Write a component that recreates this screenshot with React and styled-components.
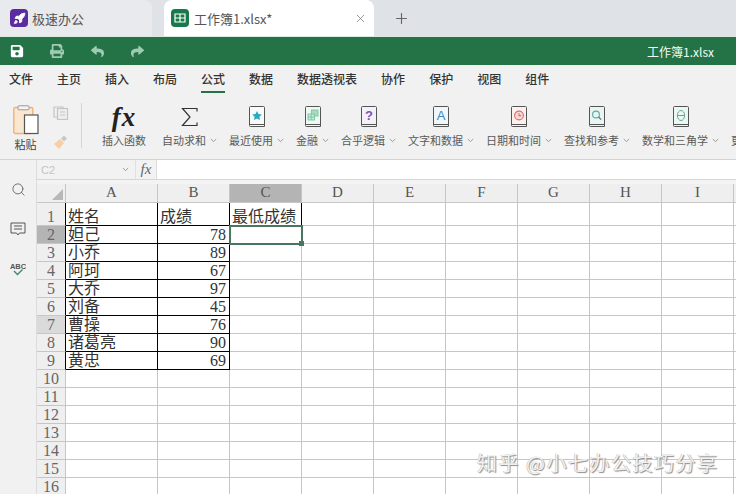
import React from 'react';
import styled, { createGlobalStyle } from 'styled-components';
import { FaSave, FaPrint, FaReply, FaShare } from 'react-icons/fa';
import { Rocket, X, Plus, Search } from 'lucide-react';

const CJK = `"Noto Sans CJK SC", "Noto Sans", sans-serif`;
const SERIF = `"Liberation Serif", "Noto Sans CJK SC", serif`;

const Global = createGlobalStyle`
  html, body { margin: 0; padding: 0; background: #fff; }
  * { box-sizing: border-box; }
`;
const Page = styled.div`
  width: 736px; height: 494px; overflow: hidden; position: relative;
  display: flex; flex-direction: column; font-family: ${CJK}; background: #fff;
`;
const TabBar = styled.div`
  height: 37px; flex: none; display: flex; background: #dfe2e7; border-bottom: 1px solid #dcebe2;
`;
const Tab = styled.div`
  height: 36px; display: flex; align-items: center; flex: none;
  width: ${p => p.$active ? '210px' : '152px'};
  margin-right: ${p => p.$active ? '19px' : '12px'};
  padding-left: ${p => p.$active ? '7px' : '10px'};
  background: ${p => p.$active ? '#fff' : '#e8eaed'};
  border-radius: ${p => p.$active ? '8px 8px 0 0' : '0 8px 0 0'};
  font-size: 13px; color: #555;
`;
const TabLogo = styled.span`
  width: 18px; height: 18px; border-radius: 4px; flex: none; margin-right: ${p => p.$gap}px;
  display: flex; align-items: center; justify-content: center;
  background: ${p => p.$bg}; color: #fff;
`;
const TabTitle = styled.span`flex: 1; white-space: nowrap;`;
const CloseBtn = styled.span`display: flex; color: #777; margin-right: 7px;`;
const NewTab = styled.span`display: flex; align-items: center; color: #666;`;

const QuickBar = styled.div`
  height: 28px; flex: none; background: #237346; display: flex; align-items: center;
  padding: 0 22px 0 10px; color: #fff;
`;
const QuickIcon = styled.span`
  width: 14px; display: flex; justify-content: center; margin-right: 26px;
  color: ${p => p.$dim ? '#9fcbb2' : '#fff'};
`;
const DocTitle = styled.span`margin-left: auto; font-size: 12px; color: #f2fbf5;`;

const MenuBar = styled.div`
  height: 30px; flex: none; background: #f1f1f1; display: flex; gap: 24px; padding-left: 9px;
`;
const MenuItem = styled.div`
  height: 28px; line-height: 28px; font-size: 12px; font-weight: 500; color: #333; white-space: nowrap;
  border-bottom: ${p => p.$active ? '2px solid #237346' : 'none'};
`;

const Ribbon = styled.div`
  height: 65px; flex: none; background: #f1f1f1; border-bottom: 1px solid #d4d4d4;
  display: flex; align-items: flex-start; padding-left: 13px; overflow: hidden;
`;
const PasteCol = styled.div`
  width: 25px; flex: none; margin-top: 10px; display: flex; flex-direction: column; align-items: center;
`;
const PasteLabel = styled.span`font-size: 11px; color: #444; line-height: 14px; margin-top: 2px; white-space: nowrap;`;
const SmallCol = styled.div`
  width: 17px; margin-left: 14px; margin-top: 11px; flex: none; display: flex; flex-direction: column; gap: 15px; align-items: center;
`;
const Divider = styled.div`width: 1px; height: 45px; margin: 8px 20px 0 12px; background: #d6d6d6; flex: none;`;
const FnItem = styled.div`
  flex: none; display: flex; flex-direction: column; align-items: center;
  margin-right: ${p => p.$plain ? '16px' : '12px'};
`;
const FnIcon = styled.div`
  height: 28px; margin-top: 8px; margin-bottom: 1px; display: flex; align-items: center; justify-content: center;
`;
const FnLabel = styled.div`
  display: flex; align-items: center; gap: 4px; margin-top: 1px; font-size: 11px; line-height: 14px; color: #595959; white-space: nowrap;
`;
const FxGlyph = styled.span`
  font-family: "Liberation Serif", serif; font-style: italic; font-weight: 700; font-size: 27px; line-height: 28px; letter-spacing: 1px; color: #222;
`;

const Body = styled.div`flex: 1; min-height: 0; display: flex;`;
const SideBar = styled.div`
  width: 37px; flex: none; background: #f1f1f1; border-right: 1px solid #dcdcdc;
  display: flex; flex-direction: column; align-items: center; padding-top: 21px; gap: 24px; color: #555;
`;
const SideIcon = styled.span`display: flex; height: 16px; align-items: center;`;
const SheetArea = styled.div`flex: 1; min-width: 0; overflow: hidden; display: flex; flex-direction: column; background: #f3f3f3;`;
const FormulaBar = styled.div`
  height: 20px; flex: none; display: flex; border-bottom: 1px solid #d6d6d6; background: #fff;
`;
const NameBox = styled.div`
  width: 99px; flex: none; background: #f2f2f2; display: flex; align-items: center; justify-content: space-between;
  padding: 0 6px 0 4px; color: #c4c4c4; font: 11px "Liberation Sans", sans-serif; border-right: 1px solid #e0e0e0;
`;
const FxBox = styled.div`
  width: 21px; flex: none; background: #f2f2f2; border-right: 1px solid #dcdcdc; text-align: center;
  font: italic 15px/19px "Liberation Serif", serif; color: #666;
`;
const SheetGap = styled.div`height: 4px; flex: none;`;
const Grid = styled.div`
  display: grid; grid-template-columns: 29px 92px repeat(9, 72px);
  grid-auto-rows: 18px; grid-template-rows: 19px 23px; background: #fff; width: 769px;
`;
const Corner = styled.div`
  background: #efefef; border-right: 1px solid #c6c6c6; border-bottom: 1px solid #c6c6c6;
  display: flex; align-items: flex-end; justify-content: flex-end; padding: 0 2px 2px 0;
`;
const ColHead = styled.div`
  background: ${p => p.$sel ? '#b4b4b4' : '#efefef'}; color: #555;
  border-right: 1px solid #c6c6c6; border-bottom: 1px solid #c6c6c6;
  text-align: center; font: 15px/17px ${SERIF};
`;
const RowHead = styled.div`
  background: ${p => p.$sel === 'on' ? '#b4b4b4' : p.$sel === 'hover' ? '#dadada' : '#efefef'}; color: #666;
  border-right: 1px solid ${p => p.$black ? '#000' : '#c6c6c6'}; border-bottom: 1px solid #c6c6c6;
  font: 16px/17px ${SERIF};
  display: flex; align-items: flex-end; justify-content: center;
`;
const Cell = styled.div`
  position: relative; white-space: nowrap; padding: 0 3px 0 2px;
  border-right: 1px solid ${p => p.$right ? '#000' : '#c6c6c6'};
  border-bottom: 1px solid ${p => p.$bottom ? '#000' : '#c6c6c6'};
  display: flex; align-items: flex-end; justify-content: ${p => p.$num ? 'flex-end' : 'flex-start'};
  font-family: ${SERIF}; font-size: 16px; line-height: 17px; color: #333;
`;
const Selection = styled.div`
  position: absolute; left: -1px; top: -1px; right: -2px; bottom: -2px; border: 2px solid #4a7560; z-index: 1;
`;
const Handle = styled.div`
  position: absolute; right: -3px; bottom: -3px; width: 5px; height: 5px; background: #4a7560;
`;
const Watermark = styled.div`
  position: absolute; left: 477px; top: 450px; font-size: 20px; line-height: 26px; letter-spacing: 1.5px; white-space: nowrap; z-index: 2;
  color: rgba(255,255,255,.85); text-shadow: 1px 1px 1px #8c8c8c, -0.5px -0.5px 0 #bbb;
`;

const Chevron = () => (
  <svg width="7" height="5" viewBox="0 0 7 5"><path d="M.8 1l2.7 2.6L6.2 1" fill="none" stroke="#888" strokeWidth=".8" /></svg>
);
const Sigma = () => (
  <svg width="18" height="20" viewBox="0 0 18 20"><path d="M16 4.5V1.5H1.5L9 10 1.5 18.5H16V15.5" fill="none" stroke="#333" strokeWidth="1.2" /></svg>
);
const Book = ({ tint, children }) => (
  <svg width="18" height="24" viewBox="0 0 18 24">
    <path d="M1.5 2.5a1 1 0 0 1 1-1h13a1 1 0 0 1 1 1v19h-14a1 1 0 0 1-1-1z" fill={tint} stroke="#555" strokeWidth="1" />
    <path d="M1.5 19.5h15" stroke="#555" strokeWidth="1" />
    {children}
  </svg>
);
const glyphs = {
  star: <path d="M9 6l1.5 3 3.3.4-2.4 2.3.6 3.2L9 13.4l-3 1.5.6-3.2-2.4-2.3 3.3-.4z" fill="#27a9c0" />,
  money: <g fill="none" stroke="#7cc4a0" strokeWidth=".9"><rect x="7.5" y="5" width="6.5" height="6" fill="#a6dcc0" /><rect x="4" y="9" width="6.5" height="6" fill="#c4e9d6" /><path d="M4 12h6.5M7.2 9v6" /></g>,
  question: <text x="9" y="15" textAnchor="middle" fontFamily="Liberation Sans" fontWeight="700" fontSize="13" fill="#7a55b0">?</text>,
  letter: <text x="9" y="15" textAnchor="middle" fontFamily="Liberation Sans" fontSize="13" fill="#3f86b5">A</text>,
  clock: <g fill="none" stroke="#d9706c" strokeWidth="1.1"><circle cx="9" cy="10.5" r="4.4" fill="#f8d8d6" /><path d="M9 8.2v2.4h2.2" /></g>,
  lens: <g fill="none" stroke="#5aa9a4" strokeWidth="1.1"><circle cx="8" cy="9.5" r="3.4" /><path d="M10.6 12l2.6 2.6" stroke="#666" /></g>,
  theta: <g fill="none" stroke="#5da88c" strokeWidth="1"><ellipse cx="9" cy="10.5" rx="3.6" ry="5" /><path d="M5.4 10.5h7.2" /></g>,
};
const fns = [
  ['最近使用', 'star', '#f7fbfb'], ['金融', 'money', '#eef8f3'], ['合乎逻辑', 'question', '#f5f1fa'],
  ['文字和数据', 'letter', '#f0f7fb'], ['日期和时间', 'clock', '#fdf1f0'], ['查找和参考', 'lens', '#e9f5f3'],
  ['数学和三角学', 'theta', '#ecf7f3'], ['更多函数', 'star', '#f7fbfb'],
];
const menus = ['文件', '主页', '插入', '布局', '公式', '数据', '数据透视表', '协作', '保护', '视图', '组件'];
const cols = ['A', 'B', 'C', 'D', 'E', 'F', 'G', 'H', 'I', ''];
const data = [['姓名', '成绩', '最低成绩'], ['妲己', 78], ['小乔', 89], ['阿珂', 67], ['大乔', 97], ['刘备', 45], ['曹操', 76], ['诸葛亮', 90], ['黄忠', 69]];

export default function App() {
  const rows = Array.from({ length: 16 }, (_, i) => i);
  return (
    <Page>
      <Global />
      <TabBar>
        <Tab>
          <TabLogo $bg="#5a2ca0" $gap={4}><Rocket size={13} fill="#fff" strokeWidth={1.5} /></TabLogo>
          <TabTitle>极速办公</TabTitle>
        </Tab>
        <Tab $active>
          <TabLogo $bg="#167a4a" $gap={5}>
            <svg width="12" height="10" viewBox="0 0 12 10"><path d="M1 1h10v8H1zM1 5h10M6 1v8" fill="none" stroke="#fff" strokeWidth="1.2" /></svg>
          </TabLogo>
          <TabTitle>工作簿1.xlsx*</TabTitle>
          <CloseBtn><X size={13} strokeWidth={1.4} /></CloseBtn>
        </Tab>
        <NewTab><Plus size={17} strokeWidth={1.6} /></NewTab>
      </TabBar>
      <QuickBar>
        <QuickIcon><FaSave size={14} /></QuickIcon>
        <QuickIcon $dim><FaPrint size={14} /></QuickIcon>
        <QuickIcon $dim><FaReply size={13} /></QuickIcon>
        <QuickIcon $dim><FaShare size={13} /></QuickIcon>
        <DocTitle>工作簿1.xlsx</DocTitle>
      </QuickBar>
      <MenuBar>
        {menus.map(m => <MenuItem key={m} $active={m === '公式'}>{m}</MenuItem>)}
      </MenuBar>
      <Ribbon>
        <PasteCol>
          <svg width="26" height="30" viewBox="0 0 26 30">
            <rect x=".8" y="2.5" width="19" height="26" rx="1.5" fill="#fbe6cf" stroke="#f0b27a" strokeWidth="1.4" />
            <rect x="5" y=".8" width="11" height="4" rx="1" fill="#f4f4f4" stroke="#999" />
            <rect x="11.5" y="10" width="13.5" height="18.5" fill="#fff" stroke="#555" strokeWidth="1.2" />
          </svg>
          <PasteLabel>粘贴</PasteLabel>
        </PasteCol>
        <SmallCol>
          <svg width="16" height="14" viewBox="0 0 16 14"><g fill="none" stroke="#c4c4c4" strokeWidth="1.2"><rect x="4.5" y="2.5" width="10" height="11" fill="#eee" /><path d="M1 1h9v2M1 1v10h3M7 6h5M7 9h5" /></g></svg>
          <svg width="15" height="15" viewBox="0 0 15 15"><path d="M1 9l6-5 4 4-5 6z" fill="#f6cfa8" /><path d="M8 3.5l3-3 3 3-3 3z" fill="#c8c8c8" /></svg>
        </SmallCol>
        <Divider />
        <FnItem $plain>
          <FnIcon><FxGlyph>fx</FxGlyph></FnIcon>
          <FnLabel>插入函数</FnLabel>
        </FnItem>
        <FnItem>
          <FnIcon><Sigma /></FnIcon>
          <FnLabel>自动求和<Chevron /></FnLabel>
        </FnItem>
        {fns.map(([label, g, tint]) => (
          <FnItem key={label}>
            <FnIcon><Book tint={tint}>{glyphs[g]}</Book></FnIcon>
            <FnLabel>{label}<Chevron /></FnLabel>
          </FnItem>
        ))}
      </Ribbon>
      <Body>
        <SideBar>
          <SideIcon><Search size={15} strokeWidth={1.3} /></SideIcon>
          <SideIcon>
            <svg width="16" height="16" viewBox="0 0 16 16"><path d="M1 2h14v10H9.5L8 14l-1.5-2H1z M4 5h8M4 8h8" fill="none" stroke="#555" strokeWidth="1" /></svg>
          </SideIcon>
          <SideIcon>
            <svg width="16" height="16" viewBox="0 0 16 16">
              <text x="8" y="7.5" textAnchor="middle" fontFamily="Liberation Sans" fontWeight="700" fontSize="7.5" fill="#555">ABC</text>
              <path d="M4 10l3.5 3.5L12.5 8.5" fill="none" stroke="#3d8a6a" strokeWidth="1.4" />
            </svg>
          </SideIcon>
        </SideBar>
        <SheetArea>
          <FormulaBar>
            <NameBox>C2<Chevron /></NameBox>
            <FxBox>fx</FxBox>
          </FormulaBar>
          <SheetGap />
          <Grid>
            <Corner><svg width="11" height="11" viewBox="0 0 11 11"><path d="M11 0v11H0z" fill="#b8b8b8" /></svg></Corner>
            {cols.map((c, i) => <ColHead key={i} $sel={c === 'C'}>{c}</ColHead>)}
            {rows.map(r => (
              <React.Fragment key={r}>
                <RowHead $black={r < 9} $sel={r === 1 ? 'on' : r === 6 ? 'hover' : undefined}>{r + 1}</RowHead>
                {cols.map((c, ci) => {
                  const v = data[r]?.[ci];
                  const inTable = r < 9;
                  return (
                    <Cell
                      key={ci}
                      $num={typeof v === 'number'}
                      $right={inTable && (ci < 2 || (ci === 2 && r === 0))}
                      $bottom={inTable && (ci < 2 || (ci === 2 && r === 0))}
                    >
                      {v}
                      {r === 1 && ci === 2 && <Selection><Handle /></Selection>}
                    </Cell>
                  );
                })}
              </React.Fragment>
            ))}
          </Grid>
        </SheetArea>
      </Body>
      <Watermark>知乎 @小七办公技巧分享</Watermark>
    </Page>
  );
}
